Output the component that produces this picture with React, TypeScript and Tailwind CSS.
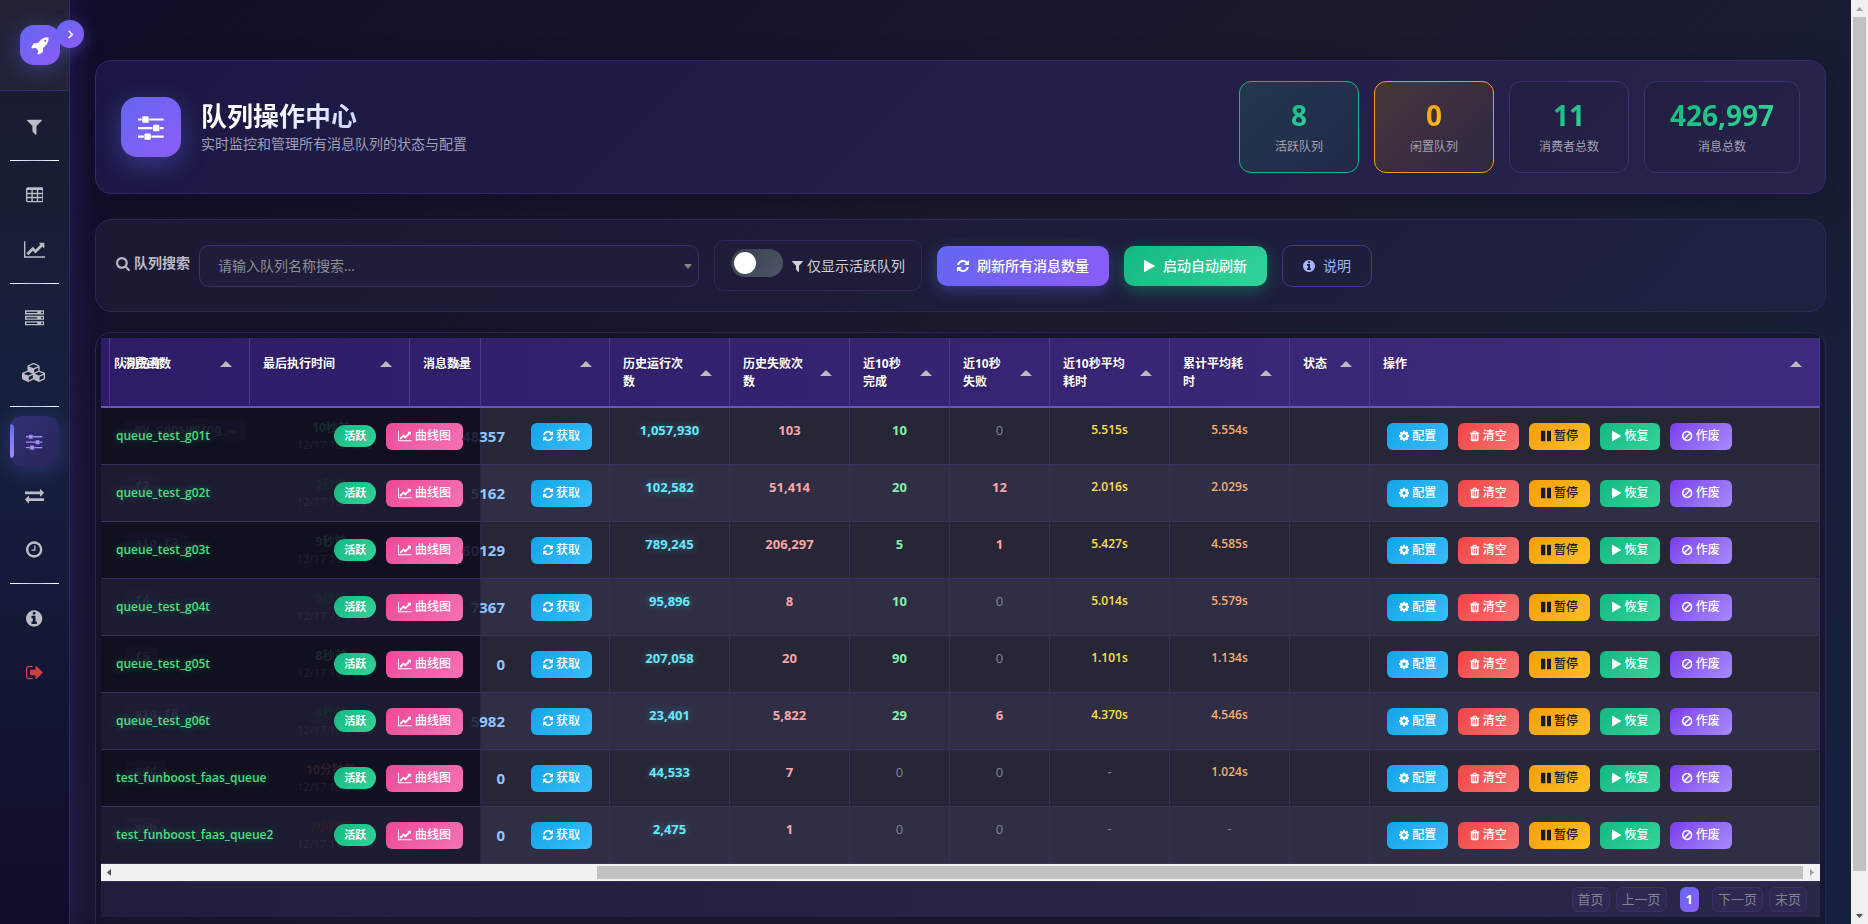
import React from 'react';
import clsx from 'clsx';

type IconDef = { x: number; w: number; d: string };

// Font Awesome 4 glyphs, 1792 units per em
const icons: Record<string, IconDef> = {
  rocket: {
    x: 0,
    w: 1664,
    d: 'M1440 448q0-40-28-68t-68-28-68 28-28 68 28 68 68 28 68-28 28-68zm224-288q0 249-75.5 430.5t-253.5 360.5q-81 80-195 176l-20 379q-2 16-16 26l-384 224q-7 4-16 4-12 0-23-9l-64-64q-13-14-8-32l85-276-281-281-276 85q-3 1-9 1-14 0-23-9l-64-64q-17-19-5-39l224-384q10-14 26-16l379-20q96-114 176-195 188-187 358-258t431-71q14 0 24 9.5t10 22.5z',
  },
  filter: {
    x: 192,
    w: 1408,
    d: 'M1595 295q17 41-14 70l-493 493v742q0 42-39 59-13 5-25 5-27 0-45-19l-256-256q-19-19-19-45v-486l-493-493q-31-29-14-70 17-39 59-39h1280q42 0 59 39z',
  },
  table: {
    x: 64,
    w: 1664,
    d: 'M576 1376v-192q0-14-9-23t-23-9h-320q-14 0-23 9t-9 23v192q0 14 9 23t23 9h320q14 0 23-9t9-23zm0-384v-192q0-14-9-23t-23-9h-320q-14 0-23 9t-9 23v192q0 14 9 23t23 9h320q14 0 23-9t9-23zm512 384v-192q0-14-9-23t-23-9h-320q-14 0-23 9t-9 23v192q0 14 9 23t23 9h320q14 0 23-9t9-23zm-512-768v-192q0-14-9-23t-23-9h-320q-14 0-23 9t-9 23v192q0 14 9 23t23 9h320q14 0 23-9t9-23zm512 384v-192q0-14-9-23t-23-9h-320q-14 0-23 9t-9 23v192q0 14 9 23t23 9h320q14 0 23-9t9-23zm512 384v-192q0-14-9-23t-23-9h-320q-14 0-23 9t-9 23v192q0 14 9 23t23 9h320q14 0 23-9t9-23zm-512-768v-192q0-14-9-23t-23-9h-320q-14 0-23 9t-9 23v192q0 14 9 23t23 9h320q14 0 23-9t9-23zm512 384v-192q0-14-9-23t-23-9h-320q-14 0-23 9t-9 23v192q0 14 9 23t23 9h320q14 0 23-9t9-23zm0-384v-192q0-14-9-23t-23-9h-320q-14 0-23 9t-9 23v192q0 14 9 23t23 9h320q14 0 23-9t9-23zm128-320v1088q0 66-47 113t-113 47h-1344q-66 0-113-47t-47-113v-1088q0-66 47-113t113-47h1344q66 0 113 47t47 113z',
  },
  chart: {
    x: 0,
    w: 2048,
    d: 'M2048 1536v128h-2048v-1536h128v1408h1920zm-128-1248v435q0 21-19.5 29.5t-35.5-7.5l-121-121-633 633q-10 10-23 10t-23-10l-233-233-416 416-192-192 585-585q10-10 23-10t23 10l233 233 464-464-121-121q-16-16-7.5-35.5t29.5-19.5h435q14 0 23 9t9 23z',
  },
  server: {
    x: 0,
    w: 1792,
    d: 'M128 1408h1024v-128h-1024v128zm0-512h1024v-128h-1024v128zm1568 448q0-40-28-68t-68-28-68 28-28 68 28 68 68 28 68-28 28-68zm-1568-960h1024v-128h-1024v128zm1568 448q0-40-28-68t-68-28-68 28-28 68 28 68 68 28 68-28 28-68zm0-512q0-40-28-68t-68-28-68 28-28 68 28 68 68 28 68-28 28-68zm96 832v384h-1792v-384h1792zm0-512v384h-1792v-384h1792zm0-512v384h-1792v-384h1792z',
  },
  cubes: {
    x: 0,
    w: 2304,
    d: 'M640 1632l384-192v-314l-384 164v342zm-64-454l404-173-404-173-404 173zm1088 454l384-192v-314l-384 164v342zm-64-454l404-173-404-173-404 173zm-448-293l384-165v-266l-384 164v267zm-64-379l441-189-441-189-441 189zm1088 518v416q0 36-19 67t-52 47l-448 224q-25 14-57 14t-57-14l-448-224q-4-2-7-4-2 2-7 4l-448 224q-25 14-57 14t-57-14l-448-224q-33-16-52-47t-19-67v-416q0-38 21.5-70t56.5-48l434-186v-400q0-38 21.5-70t56.5-48l448-192q23-10 50-10t50 10l448 192q35 16 56.5 48t21.5 70v400l434 186q36 16 57 48t21 70z',
  },
  sliders: {
    x: 0,
    w: 1536,
    d: 'M352 1408v128h-352v-128h352zm352-128q26 0 45 19t19 45v256q0 26-19 45t-45 19h-256q-26 0-45-19t-19-45v-256q0-26 19-45t45-19h256zm160-384v128h-864v-128h864zm-640-512v128h-224v-128h224zm1312 1024v128h-736v-128h736zm-960-1152q26 0 45 19t19 45v256q0 26-19 45t-45 19h-256q-26 0-45-19t-19-45v-256q0-26 19-45t45-19h256zm640 512q26 0 45 19t19 45v256q0 26-19 45t-45 19h-256q-26 0-45-19t-19-45v-256q0-26 19-45t45-19h256zm320 128v128h-224v-128h224zm0-512v128h-864v-128h864z',
  },
  exchange: {
    x: 0,
    w: 1792,
    d: 'M1792 1184v192q0 13-9.5 22.5t-22.5 9.5h-1376v192q0 13-9.5 22.5t-22.5 9.5q-12 0-24-10l-319-320q-9-9-9-22 0-14 9-23l320-320q9-9 23-9 13 0 22.5 9.5t9.5 22.5v192h1376q13 0 22.5 9.5t9.5 22.5zm0-544q0 14-9 23l-320 320q-9 9-23 9-13 0-22.5-9.5t-9.5-22.5v-192h-1376q-13 0-22.5-9.5t-9.5-22.5v-192q0-13 9.5-22.5t22.5-9.5h1376v-192q0-14 9-23t23-9q12 0 24 10l319 319q9 9 9 23z',
  },
  clock: {
    x: 128,
    w: 1536,
    d: 'M1024 544v448q0 14-9 23t-23 9h-320q-14 0-23-9t-9-23v-64q0-14 9-23t23-9h224v-352q0-14 9-23t23-9h64q14 0 23 9t9 23zm416 352q0-148-73-273t-198-198-273-73-273 73-198 198-73 273 73 273 198 198 273 73 273-73 198-198 73-273zm224 0q0 209-103 385.5t-279.5 279.5-385.5 103-385.5-103-279.5-279.5-103-385.5 103-385.5 279.5-279.5 385.5-103 385.5 103 279.5 279.5 103 385.5z',
  },
  info: {
    x: 128,
    w: 1536,
    d: 'M1152 1376v-160q0-14-9-23t-23-9h-96v-512q0-14-9-23t-23-9h-320q-14 0-23 9t-9 23v160q0 14 9 23t23 9h96v320h-96q-14 0-23 9t-9 23v160q0 14 9 23t23 9h448q14 0 23-9t9-23zm-128-896v-160q0-14-9-23t-23-9h-192q-14 0-23 9t-9 23v160q0 14 9 23t23 9h192q14 0 23-9t9-23zm640 416q0 209-103 385.5t-279.5 279.5-385.5 103-385.5-103-279.5-279.5-103-385.5 103-385.5 279.5-279.5 385.5-103 385.5 103 279.5 279.5 103 385.5z',
  },
  signOut: {
    x: 64,
    w: 1664,
    d: 'M704 1440q0 4 1 20t.5 26.5-3 23.5-10 19.5-20.5 6.5h-320q-119 0-203.5-84.5t-84.5-203.5v-704q0-119 84.5-203.5t203.5-84.5h320q13 0 22.5 9.5t9.5 22.5q0 4 1 20t.5 26.5-3 23.5-10 19.5-20.5 6.5h-320q-66 0-113 47t-47 113v704q0 66 47 113t113 47h312l11.5 1 11.5 3 8 5.5 7 9 2 13.5zm928-544q0 26-19 45l-544 544q-19 19-45 19t-45-19-19-45v-288h-448q-26 0-45-19t-19-45v-384q0-26 19-45t45-19h448v-288q0-26 19-45t45-19 45 19l544 544q19 19 19 45z',
  },
  search: {
    x: 64,
    w: 1664,
    d: 'M1216 832q0-185-131.5-316.5t-316.5-131.5-316.5 131.5-131.5 316.5 131.5 316.5 316.5 131.5 316.5-131.5 131.5-316.5zm512 832q0 52-38 90t-90 38q-54 0-90-38l-343-342q-179 124-399 124-143 0-273.5-55.5t-225-150-150-225-55.5-273.5 55.5-273.5 150-225 225-150 273.5-55.5 273.5 55.5 225 150 150 225 55.5 273.5q0 220-124 399l343 343q37 37 37 90z',
  },
  refresh: {
    x: 128,
    w: 1536,
    d: 'M1639 1056q0 5-1 7-64 268-268 434.5t-478 166.5q-146 0-282.5-55t-243.5-157l-129 129q-19 19-45 19t-45-19-19-45v-448q0-26 19-45t45-19h448q26 0 45 19t19 45-19 45l-137 137q71 66 161 102t187 36q134 0 250-65t186-179q11-17 53-117 8-23 30-23h192q13 0 22.5 9.5t9.5 22.5zm25-800v448q0 26-19 45t-45 19h-448q-26 0-45-19t-19-45 19-45l138-138q-148-137-349-137-134 0-250 65t-186 179q-11 17-53 117-8 23-30 23h-199q-13 0-22.5-9.5t-9.5-22.5v-7q65-268 270-434.5t480-166.5q146 0 284 55.5t245 156.5l130-129q19-19 45-19t45 19 19 45z',
  },
  play: {
    x: 192,
    w: 1408,
    d: 'M1576 927l-1328 738q-23 13-39.5 3t-16.5-36v-1472q0-26 16.5-36t39.5 3l1328 738q23 13 23 31t-23 31z',
  },
  pause: {
    x: 128,
    w: 1536,
    d: 'M1664 192v1408q0 26-19 45t-45 19h-512q-26 0-45-19t-19-45v-1408q0-26 19-45t45-19h512q26 0 45 19t19 45zm-896 0v1408q0 26-19 45t-45 19h-512q-26 0-45-19t-19-45v-1408q0-26 19-45t45-19h512q26 0 45 19t19 45z',
  },
  cog: {
    x: 128,
    w: 1536,
    d: 'M1152 896q0-106-75-181t-181-75-181 75-75 181 75 181 181 75 181-75 75-181zm512-109v222q0 12-8 23t-20 13l-185 28q-19 54-39 91 35 50 107 138 10 12 10 25t-9 23q-27 37-99 108t-94 71q-12 0-26-9l-138-108q-44 23-91 38-16 136-29 186-7 28-36 28h-222q-14 0-24.5-8.5t-11.5-21.5l-28-184q-49-16-90-37l-141 107q-10 9-25 9-14 0-25-11-126-114-165-168-7-10-7-23 0-12 8-23 15-21 51-66.5t54-70.5q-27-50-41-99l-183-27q-13-2-21-12.5t-8-23.5v-222q0-12 8-23t19-13l186-28q14-46 39-92-40-57-107-138-10-12-10-24 0-10 9-23 26-36 98.5-107.5t94.5-71.5q13 0 26 10l138 107q44-23 91-38 16-136 29-186 7-28 36-28h222q14 0 24.5 8.5t11.5 21.5l28 184q49 16 90 37l142-107q9-9 24-9 13 0 25 10 129 119 165 170 7 8 7 22 0 12-8 23-15 21-51 66.5t-54 70.5q26 50 41 98l183 28q13 2 21 12.5t8 23.5z',
  },
  trash: {
    x: 192,
    w: 1408,
    d: 'M704 1376v-704q0-14-9-23t-23-9h-64q-14 0-23 9t-9 23v704q0 14 9 23t23 9h64q14 0 23-9t9-23zm256 0v-704q0-14-9-23t-23-9h-64q-14 0-23 9t-9 23v704q0 14 9 23t23 9h64q14 0 23-9t9-23zm256 0v-704q0-14-9-23t-23-9h-64q-14 0-23 9t-9 23v704q0 14 9 23t23 9h64q14 0 23-9t9-23zm-544-992h448l-48-117q-7-9-17-11h-317q-10 2-17 11zm928 32v64q0 14-9 23t-23 9h-96v948q0 83-47 143.5t-113 60.5h-832q-66 0-113-58.5t-47-141.5v-952h-96q-14 0-23-9t-9-23v-64q0-14 9-23t23-9h309l70-167q15-37 54-63t79-26h320q40 0 79 26t54 63l70 167h309q14 0 23 9t9 23z',
  },
  ban: {
    x: 128,
    w: 1536,
    d: 'M1440 893q0-161-87-295l-754 753q137 89 297 89 111 0 211.5-43.5t173.5-116.5 116-174.5 43-212.5zm-999 299l755-754q-135-91-300-91-148 0-273 73t-198 199-73 274q0 162 89 299zm1223-299q0 157-61 300t-163.5 246-245 164-298.5 61-298.5-61-245-164-163.5-246-61-300 61-299.5 163.5-245.5 245-164 298.5-61 298.5 61 245 164 163.5 245.5 61 299.5z',
  },
};

const Icon = ({ name, size, className }: { name: string; size: number; className?: string }) => {
  const icon = icons[name];
  return (
    <svg
      viewBox={`${icon.x} 0 ${icon.w} 1792`}
      width={(size * icon.w) / 1792}
      height={size}
      fill="currentColor"
      className={clsx('shrink-0', className)}
      aria-hidden="true"
    >
      <path d={icon.d} />
    </svg>
  );
};

const navGroups = [
  [{ icon: 'filter' }],
  [{ icon: 'table' }, { icon: 'chart' }],
  [{ icon: 'server' }, { icon: 'cubes' }],
  [{ icon: 'sliders', active: true }, { icon: 'exchange' }, { icon: 'clock' }],
  [{ icon: 'info' }, { icon: 'signOut', danger: true }],
] as { icon: string; active?: boolean; danger?: boolean }[][];

const Sidebar = () => (
  <aside className="relative z-20 w-[70px] shrink-0 border-r border-[#2d2a63] bg-[linear-gradient(180deg,#1a1a2e_0%,#16213e_45%,#0f0c29_100%)] shadow-[4px_0_30px_rgba(99,60,200,0.25)]">
    <div className="flex h-[91px] items-center justify-center border-b border-[#322c6b] bg-white/4 pl-[11px]">
      <div className="flex h-10 w-10 items-center justify-center rounded-[14px] bg-linear-135 from-[#6366f1] to-[#8b5cf6] text-white shadow-[0_4px_20px_rgba(99,102,241,0.4)]">
        <Icon name="rocket" size={19} />
      </div>
    </div>
    <button className="absolute top-5 -right-[15px] flex h-7 w-7 items-center justify-center rounded-full bg-linear-135 from-[#6366f1] to-[#8b5cf6] text-white shadow-[0_4px_15px_rgba(99,102,241,0.4)]">
      <svg width="7" height="9" viewBox="0 0 8 10" fill="none" stroke="currentColor" strokeWidth="2">
        <path d="M2 1l4 4-4 4" />
      </svg>
    </button>
    <nav className="px-[10px] pt-[10px]">
      {navGroups.map((group, i) => (
        <div key={i}>
          {i > 0 && <div className="mt-[9px] mb-[9px] h-px bg-linear-to-r from-white via-[#c7c3f5] to-white" />}
          <div className="flex flex-col gap-1">
            {group.map((item) => (
              <a
                key={item.icon}
                href="#"
                className={clsx(
                  'relative flex h-[50px] items-center justify-center overflow-hidden rounded-xl',
                  item.active && 'bg-linear-135 from-[#2f3276] to-[#2a2558] text-[#a78bfa] shadow-[0_4px_20px_rgba(99,102,241,0.3)]',
                  item.danger && 'text-[#cf3f45]',
                  !item.active && !item.danger && 'text-[#bcbcc6]'
                )}
              >
                {item.active && (
                  <span className="absolute top-2 bottom-2 left-0 w-1 rounded-r bg-linear-to-b from-[#6366f1] to-[#a78bfa]" />
                )}
                <Icon name={item.icon} size={19} />
              </a>
            ))}
          </div>
        </div>
      ))}
    </nav>
  </aside>
);

const stats = [
  {
    value: '8',
    label: '活跃队列',
    box: 'border-[#10b981] bg-linear-135 from-[#21384d] to-[#222a4a]',
    text: 'from-[#10b981] to-[#34d399]',
  },
  {
    value: '0',
    label: '闲置队列',
    box: 'border-[#f59e0b] bg-linear-135 from-[#46353a] to-[#302843]',
    text: 'from-[#f59e0b] to-[#fbbf24]',
  },
  { value: '11', label: '消费者总数', box: 'border-[#3d3070] bg-linear-135 from-[#201f3f] to-[#25224a]', text: 'from-[#10b981] to-[#34d399]' },
  { value: '426,997', label: '消息总数', box: 'border-[#3d3070] bg-linear-135 from-[#201f3f] to-[#25224a]', text: 'from-[#10b981] to-[#34d399]' },
];

const PageHeader = () => (
  <header className="flex items-center justify-between rounded-2xl border border-[#32286a] bg-linear-135 from-[#1b1845] to-[#28234a] px-[25px] py-5 shadow-[0_8px_32px_rgba(0,0,0,0.2)]">
    <div className="flex items-center gap-5">
      <div className="flex h-[60px] w-[60px] items-center justify-center rounded-2xl bg-linear-135 from-[#6366f1] to-[#8b5cf6] text-white shadow-[0_8px_25px_rgba(99,102,241,0.4)]">
        <Icon name="sliders" size={30} />
      </div>
      <div className="pb-[2px]">
        <h1 className="w-fit bg-linear-135 from-white from-35% to-[#c7d2fe] bg-clip-text text-[26px] leading-9 font-bold text-transparent">
          队列操作中心
        </h1>
        <p className="text-sm leading-5 text-[#a09eb4]">实时监控和管理所有消息队列的状态与配置</p>
      </div>
    </div>
    <div className="flex gap-[15px]">
      {stats.map((s) => (
        <div key={s.label} className={clsx('flex h-[92px] min-w-[120px] flex-col items-center justify-center rounded-xl border px-[25px] pt-1', s.box)}>
          <div className={clsx('bg-linear-135 bg-clip-text text-[28px] leading-8 font-bold text-transparent', s.text)}>{s.value}</div>
          <div className="pt-1 text-xs leading-6 text-[#a3a1b3]">{s.label}</div>
        </div>
      ))}
    </div>
  </header>
);

const SearchBar = () => (
  <section className="mt-[25px] flex items-center gap-[15px] rounded-2xl border border-[#2a2857] bg-linear-135 from-[#1b1933] to-[#1e2140] px-5 py-5">
    <div className="flex items-center gap-[9px]">
      <label htmlFor="queue" className="flex items-center gap-1 pb-[5px] text-sm font-bold text-[#bbbac4]">
        <Icon name="search" size={15} />
        队列搜索
      </label>
      <div className="relative">
        <select
          id="queue"
          defaultValue=""
          className="h-[42px] w-[500px] appearance-none rounded-[10px] border border-[#3e2f74] bg-[#1f1d3a] px-[18px] text-sm text-[#8d8d93]"
        >
          <option value="">请输入队列名称搜索...</option>
        </select>
        <svg className="absolute top-[19px] right-[7px]" width="8" height="5" viewBox="0 0 8 5" fill="#888">
          <path d="M0 0h8L4 5z" />
        </svg>
      </div>
    </div>
    <label className="flex h-[51px] items-center gap-[9px] rounded-[10px] border border-[#30275c] bg-[#1e1c39] px-4 text-sm text-[#d0d0d8]">
      <input
        type="checkbox"
        className="mb-[5px] h-7 w-[52px] appearance-none rounded-full bg-linear-135 from-[#374151] to-[#4b5563] p-[3px] before:block before:h-[22px] before:w-[22px] before:rounded-full before:bg-white"
      />
      <span className="flex items-center gap-1">
        <Icon name="filter" size={14} />
        仅显示活跃队列
      </span>
    </label>
    <button className="flex h-10 items-center gap-2 rounded-[10px] bg-linear-135 from-[#6366f1] to-[#8b5cf6] px-5 text-sm font-medium text-white shadow-[0_4px_15px_rgba(99,102,241,0.4)]">
      <Icon name="refresh" size={14} />
      刷新所有消息数量
    </button>
    <button className="flex h-10 items-center gap-2 rounded-[10px] bg-linear-135 from-[#10b981] to-[#34d399] px-5 text-sm font-medium text-white shadow-[0_4px_15px_rgba(16,185,129,0.4)]">
      <Icon name="play" size={14} />
      启动自动刷新
    </button>
    <button className="flex h-[42px] items-center gap-2 rounded-[10px] border border-[#4b3591] px-5 text-sm text-[#a5b4fc]">
      <Icon name="info" size={14} />
      说明
    </button>
  </section>
);

const SortArrow = () => (
  <svg width="12" height="6" viewBox="0 0 12 6" fill="#bbb" className="shrink-0">
    <path d="M6 0l6 6H0z" />
  </svg>
);

const headCell =
  'h-[70px] border-r border-b-2 border-r-[#4a3a8c] border-b-[#6f54b8] pt-[17px] text-left align-top text-xs leading-[18px] font-bold text-white text-shadow-[0_1px_2px_rgba(0,0,0,0.3)]';

const HeadCell = ({ label, className }: { label: string; className?: string }) => (
  <th className={clsx(headCell, 'pl-[13px]', className)}>
    <div className="flex min-h-[18px] items-center justify-between">
      <span>{label}</span>
      <span className="pr-[17px]">
        <SortArrow />
      </span>
    </div>
  </th>
);

const actions = [
  { icon: 'cog', label: '配置', cls: 'from-[#0ea5e9] to-[#38bdf8] text-white' },
  { icon: 'trash', label: '清空', cls: 'from-[#ef4444] to-[#f87171] text-white' },
  { icon: 'pause', label: '暂停', cls: 'from-[#f59e0b] to-[#fbbf24] text-[#1a1a2e]' },
  { icon: 'play', label: '恢复', cls: 'from-[#10b981] to-[#34d399] text-white' },
  { icon: 'ban', label: '作废', cls: 'from-[#7c3aed] to-[#a78bfa] text-white' },
];

const SmallButton = ({ icon, label, cls }: { icon: string; label: string; cls: string }) => (
  <button className={clsx('flex h-[27px] items-center gap-[3px] rounded-md bg-linear-135 px-3 text-xs font-medium', cls)}>
    <Icon name={icon} size={12} />
    {label}
  </button>
);

const rows = [
  { queue: 'queue_test_g01t', fn: 'my_consuming_…', ago: '10秒前', at: '12/17 19:44:46', hid: '48', msg: '357', runs: '1,057,930', fails: '103', ok10: '10', bad10: '0', avg10: '5.515s', avg: '5.554s' },
  { queue: 'queue_test_g02t', fn: 'f2', ago: '2秒前', at: '12/17 19:44:54', hid: '5', msg: '162', runs: '102,582', fails: '51,414', ok10: '20', bad10: '12', avg10: '2.016s', avg: '2.029s' },
  { queue: 'queue_test_g03t', fn: 'aio_f3', ago: '9秒前', at: '12/17 19:44:47', hid: '60', msg: '129', runs: '789,245', fails: '206,297', ok10: '5', bad10: '1', avg10: '5.427s', avg: '4.585s' },
  { queue: 'queue_test_g04t', fn: 'f4', ago: '9秒前', at: '12/17 19:44:47', hid: '7', msg: '367', runs: '95,896', fails: '8', ok10: '10', bad10: '0', avg10: '5.014s', avg: '5.579s' },
  { queue: 'queue_test_g05t', fn: 'f5', ago: '8秒前', at: '12/17 19:44:48', hid: '', msg: '0', runs: '207,058', fails: '20', ok10: '90', bad10: '0', avg10: '1.101s', avg: '1.134s' },
  { queue: 'queue_test_g06t', fn: 'aio_f6', ago: '6秒前', at: '12/17 19:44:50', hid: '5', msg: '982', runs: '23,401', fails: '5,822', ok10: '29', bad10: '6', avg10: '4.370s', avg: '4.546s' },
  { queue: 'test_funboost_faas_queue', fn: 'add', ago: '10分钟前', at: '12/17 19:34:44', hid: '', msg: '0', runs: '44,533', fails: '7', ok10: '0', bad10: '0', avg10: '-', avg: '1.024s' },
  { queue: 'test_funboost_faas_queue2', fn: 'sub', ago: '7小时前', at: '12/17 11:54:06', hid: '', msg: '0', runs: '2,475', fails: '1', ok10: '0', bad10: '0', avg10: '-', avg: '-' },
];

const cell = 'border-r border-b border-r-[#352f59] border-b-[#383160]';

const ValueCell = ({ value, color, small }: { value: string; color: string; small?: boolean }) => {
  const empty = value === '0' || value === '-';
  return (
    <td
      className={clsx(
        cell,
        'pt-[13px] text-center align-top leading-[18px]',
        small ? 'text-xs font-semibold' : 'text-[13px]',
        empty ? 'text-[#83838d]' : color,
        !small && !empty && 'font-bold'
      )}
    >
      {value}
    </td>
  );
};

const QueueTable = () => (
  <table className="w-full table-fixed border-separate border-spacing-0">
    <colgroup>
      <col className="w-[9px]" />
      <col className="w-[140px]" />
      <col className="w-[160px]" />
      <col className="w-[71px]" />
      <col className="w-[129px]" />
      <col className="w-[120px]" />
      <col className="w-[120px]" />
      <col className="w-[100px]" />
      <col className="w-[100px]" />
      <col className="w-[120px]" />
      <col className="w-[120px]" />
      <col className="w-[80px]" />
      <col />
    </colgroup>
    <thead className="bg-linear-to-r from-[#2e1c69] to-[#3f2b7d]">
      <tr>
        <th className="border-r border-b-2 border-r-[#4a3a8c] border-b-[#6f54b8]" />
        <th className={clsx(headCell, 'relative pl-1')}>
          <div className="flex items-center justify-between">
            <span>队列名称</span>
            <span className="pr-[17px]">
              <SortArrow />
            </span>
          </div>
          <span className="absolute top-[17px] left-[13px]">消费函数</span>
        </th>
        <HeadCell label="最后执行时间" />
        <th className={clsx(headCell, 'relative pl-[13px]')}>
          <span className="absolute top-[23px] right-[17px]">
            <SortArrow />
          </span>
          <span className="relative">消息数量</span>
        </th>
        <HeadCell label="" />
        <HeadCell label="历史运行次数" className="[&_span:first-child]:w-[62px]" />
        <HeadCell label="历史失败次数" className="[&_span:first-child]:w-[62px]" />
        <HeadCell label="近10秒完成" className="[&_span:first-child]:w-[42px]" />
        <HeadCell label="近10秒失败" className="[&_span:first-child]:w-[42px]" />
        <HeadCell label="近10秒平均耗时" className="[&_span:first-child]:w-[64px]" />
        <HeadCell label="累计平均耗时" className="[&_span:first-child]:w-[62px]" />
        <HeadCell label="状态" />
        <HeadCell label="操作" />
      </tr>
    </thead>
    <tbody>
      {rows.map((r, i) => (
        <tr key={r.queue} className={i % 2 ? 'bg-[#2f2e45]' : 'bg-[#272637]'}>
          <td colSpan={4} className={clsx('relative h-[57px] border-r border-b border-r-[#2b2748] border-b-[#383160] pr-[17px] pl-[15px]', i % 2 ? 'bg-[#1c1b32]' : 'bg-[#101020]')}>
            {/* scrolled columns showing faintly through the frozen ones */}
            <span
              className={clsx(
                'absolute top-[11px] left-6 h-[22px] rounded px-[10px] font-["Liberation_Mono",monospace] text-xs leading-[22px] font-bold',
                i % 2 ? 'bg-[#1e1c37] text-[#2b2a43]' : 'bg-[#141226] text-[#212036]'
              )}
            >
              {r.fn}
            </span>
            <span className={clsx('absolute top-3 right-[106px] w-[86px] text-center text-xs leading-4 font-bold', i < 6 ? 'text-[#19292f]' : 'text-[#301d2c]')}>{r.ago}</span>
            <span className={clsx('absolute top-[29px] right-[97px] w-[86px] text-[11px] leading-4', i % 2 ? 'text-[#2b2a3e]' : 'text-[#20202f]')}>{r.at}</span>
            <div className="relative flex items-center">
              <span className="flex-1 text-xs font-semibold text-[#4ade80] text-shadow-[0_0_10px_rgba(74,222,128,0.4)]">{r.queue}</span>
              <span className="mr-[10px] flex h-[22px] items-center rounded-full bg-linear-135 from-[#10b981] to-[#34d399] px-[10px] text-[11px] font-bold text-white">活跃</span>
              <SmallButton icon="chart" label="曲线图" cls="from-[#ec4899] to-[#f472b6] text-white" />
            </div>
          </td>
          <td className={clsx(cell, 'relative pr-[17px]')}>
            <div className="relative flex items-center justify-between">
              <span className="flex w-6 justify-end text-[15px] font-bold text-[#93c5fd]">
                <span className={i % 2 ? 'text-[#2a2f4c]' : 'text-[#232540]'}>{r.hid}</span>
                {r.msg}
              </span>
              <SmallButton icon="refresh" label="获取" cls="from-[#0ea5e9] to-[#38bdf8] text-white" />
            </div>
          </td>
          <ValueCell value={r.runs} color="text-[#67e8f9] text-shadow-[0_0_8px_rgba(103,232,249,0.4)]" />
          <ValueCell value={r.fails} color="text-[#fca5a5]" />
          <ValueCell value={r.ok10} color="text-[#86efac]" />
          <ValueCell value={r.bad10} color="text-[#fca5a5]" />
          <ValueCell value={r.avg10} color="text-[#fde047]" small />
          <ValueCell value={r.avg} color="text-[#f0b070]" small />
          <td className={cell} />
          <td className={clsx(cell, 'pl-[17px]')}>
            <div className="flex gap-[10px]">
              {actions.map((a) => (
                <SmallButton key={a.label} {...a} />
              ))}
            </div>
          </td>
        </tr>
      ))}
    </tbody>
  </table>
);

const HorizontalScrollbar = () => (
  <div className="flex h-[17px] items-center bg-[#f1f1f1]">
    <svg width="17" height="17" viewBox="0 0 17 17" fill="#505050">
      <path d="M10 5v7L6 8.500z" />
    </svg>
    <div className="flex flex-1 justify-end">
      <div className="h-[13px] w-[71.6%] bg-[#c1c1c1]" />
    </div>
    <svg width="17" height="17" viewBox="0 0 17 17" fill="#a3a3a3">
      <path d="M7 5v7l4-3.500z" />
    </svg>
  </div>
);

const VerticalScrollbar = () => (
  <div className="flex w-[17px] shrink-0 flex-col items-center bg-[#f1f1f1]">
    <svg width="17" height="17" viewBox="0 0 17 17" fill="#a3a3a3">
      <path d="M5 11h7L8.500 7z" />
    </svg>
    <div className="flex-1">
      <div className="h-[96%] w-[13px] bg-[#c1c1c1]" />
    </div>
    <svg width="17" height="17" viewBox="0 0 17 17" fill="#505050">
      <path d="M5 7h7l-3.500 4z" />
    </svg>
  </div>
);

const pages = ['首页', '上一页', '1', '下一页', '末页'];

const Pagination = () => (
  <div className="flex h-9 items-center justify-end gap-[6px] border-t border-[#332e60] bg-linear-to-r from-[#1f1f3d] to-[#2a2848] pr-[13px]">
    {pages.map((p) => (
      <button
        key={p}
        className={clsx(
          'h-[25px] rounded-md text-[13px]',
          p === '1'
            ? 'mx-[7px] bg-linear-135 from-[#6366f1] to-[#8b5cf6] px-[6px] font-bold text-white'
            : 'border border-[#3a3068] bg-[#2d2952] px-[5px] text-[#83818f]'
        )}
      >
        {p}
      </button>
    ))}
  </div>
);

export default function App() {
  return (
    <div className="flex h-screen overflow-hidden bg-[linear-gradient(135deg,#0f0c29_0%,#1a1a2e_50%,#16213e_100%)] font-['Open_Sans','Noto_Sans_CJK_SC',sans-serif]">
      <Sidebar />
      <main className="min-w-0 flex-1 px-[25px] pt-[60px]">
        <PageHeader />
        <SearchBar />
        <section className="mt-5 rounded-2xl border border-[#262450] bg-[#15142b]/60 p-[5px] pb-8">
          <QueueTable />
          <HorizontalScrollbar />
          <Pagination />
        </section>
      </main>
      <VerticalScrollbar />
    </div>
  );
}
